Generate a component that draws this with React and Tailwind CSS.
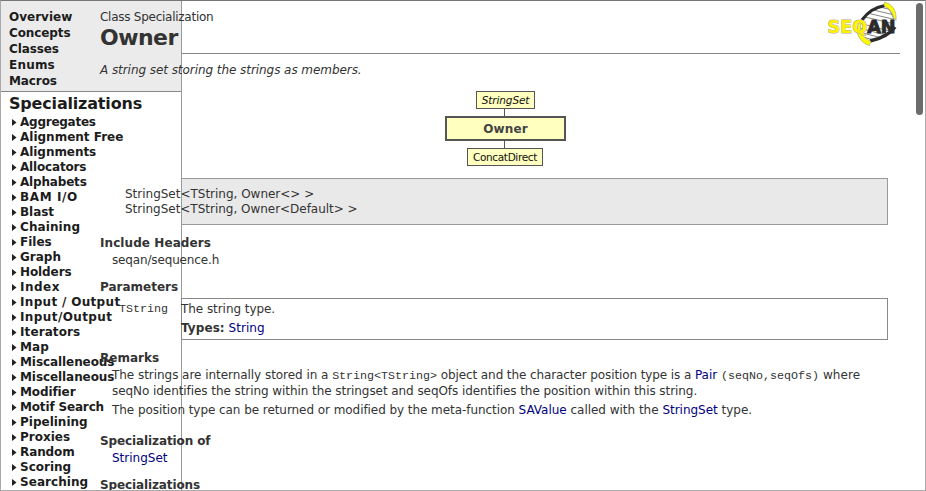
const topLinks = [
  ["Overview", "tracking-[0px]"],
  ["Concepts", "tracking-[-0.1px]"],
  ["Classes", "tracking-[-0.1px]"],
  ["Enums", "tracking-[0.2px]"],
  ["Macros", "tracking-[-0.1px]"],
];

const categories = [
  ["Aggregates", "tracking-[-0.25px]"],
  ["Alignment Free", ""],
  ["Alignments", "tracking-[-0.05px]"],
  ["Allocators", "tracking-[-0.18px]"],
  ["Alphabets", "tracking-[-0.18px]"],
  ["BAM I/O", "tracking-[0.6px]"],
  ["Blast", "tracking-[-0.05px]"],
  ["Chaining", "tracking-[0.1px]"],
  ["Files", ""],
  ["Graph", ""],
  ["Holders", "tracking-[-0.1px]"],
  ["Index", "tracking-[0.5px]"],
  ["Input / Output", "tracking-[0.32px]"],
  ["Input/Output", "tracking-[0.4px]"],
  ["Iterators", "tracking-[0.1px]"],
  ["Map", "tracking-[0.1px]"],
  ["Miscalleneous", "tracking-[-0.08px]"],
  ["Miscellaneous", "tracking-[-0.08px]"],
  ["Modifier", "tracking-[-0.1px]"],
  ["Motif Search", "tracking-[-0.16px]"],
  ["Pipelining", ""],
  ["Proxies", ""],
  ["Random", "tracking-[-0.1px]"],
  ["Scoring", ""],
  ["Searching", "tracking-[0.05px]"],
];

function Sidebar() {
  return (
    <aside className="[grid-area:1/1] w-[182px] h-[491px] border-r border-[#999] overflow-hidden font-bold text-[#1c1c1c]">
      <nav className="h-[92px] bg-[#ebebeb] border-b border-[#888] pt-[9px] pl-[9px]">
        {topLinks.map(([t, c]) => (
          <div key={t} className="h-4 leading-4"><span className={c}>{t}</span></div>
        ))}
      </nav>
      <h2 className="h-[23px] leading-[22px] pl-[9px] pt-px text-[16px] tracking-[-0.18px]"><span>Specializations</span></h2>
      <ul>
        {categories.map(([t, c]) => (
          <li key={t} className="flex items-center h-[15px] leading-[15px] pl-[12px]">
            <svg className="w-2 h-[7px] mb-px shrink-0" viewBox="0 0 8 7"><path d="M0 0L4.500 3.500L0 7Z" fill="#222" /></svg>
            <span className={"whitespace-nowrap " + c}>{t}</span>
          </li>
        ))}
      </ul>
    </aside>
  );
}

function Logo() {
  return (
    <svg className="w-[72px] h-[46px]" viewBox="0 0 72 46">
      <defs><clipPath id="helix"><path d="M34 24C39 13 48 6 59 4C64 9 68 17 67 26C62 34 53 39 44 42C36 37 32 31 34 24Z" /></clipPath></defs>
      <g clipPath="url(#helix)" stroke="#666" strokeWidth="0.8">
        <path d="M44 4L74 11M40 7.500L74 15.500M36 11L74 20M36 15.500L74 24.500M32 27L74 38M32 31L74 42M32 35L74 46M32 22L74 33" />
      </g>
      <path d="M35 19C41 11 47 6.500 58 4.500" fill="none" stroke="#2b2b2b" strokeWidth="3.2" />
      <path d="M60 6C64 11 66 15 67 20" fill="none" stroke="#777" strokeWidth="0.8" />
      <path d="M43 40C53 38 62 34 68 26" fill="none" stroke="#2b2b2b" strokeWidth="3.6" />
      <path d="M57.500 1C65 3 70 9 69 19.500L66.500 16C65 10 62 7.500 57 5Z" fill="#ff0" stroke="#998" strokeWidth="0.6" />
      <path d="M34.500 21C31 30 36 37 44 40.500L42.500 44.500C33 42 27 31 32 22Z" fill="#ff0" stroke="#998" strokeWidth="0.6" />
      <text x="0.5" y="32" textLength="68" lengthAdjust="spacingAndGlyphs" fontFamily="'DejaVu Sans', sans-serif" fontWeight="bold" fontSize="18.5" paintOrder="stroke" fill="#fff200" stroke="#aa9" strokeWidth="1">
        SEQ<tspan fill="#2b2b2b" stroke="#2b2b2b">AN</tspan>
      </text>
    </svg>
  );
}

function Link({ children, className = "" }) {
  return <a className={"text-[#000080] " + className}>{children}</a>;
}

function Diagram() {
  return (
    <div className="flex flex-col items-center w-[121px] ml-[345px] text-[10.5px] text-[#111]">
      <div className="w-[59px] h-[18px] border border-[#555] bg-[#ffffc0] text-center leading-[17px] italic"><span className="tracking-[-0.1px]">StringSet</span></div>
      <div className="w-px h-[7px] mr-[2px] bg-[#555]" />
      <div className="w-[121px] h-[25px] border-2 border-[#555] bg-[#ffffc0] text-center leading-[22px] text-[12px] font-bold text-[#444]"><span className="tracking-[0.1px]">Owner</span></div>
      <div className="w-px h-[7px] mr-[2px] bg-[#555]" />
      <div className="w-[76px] h-[18px] mr-px border border-[#555] bg-[#ffffc0] text-center leading-[17px]"><span className="tracking-[-0.35px]">ConcatDirect</span></div>
    </div>
  );
}

function Code({ children }) {
  return <code className="font-['Liberation_Mono',monospace] text-[11.67px] leading-none">{children}</code>;
}

function Content() {
  return (
    <main className="[grid-area:1/1] w-[926px] h-[491px] overflow-hidden pl-[100px] text-[#333] whitespace-nowrap">
      <header className="flex justify-between h-[53px] w-[799px]">
        <div className="pt-[9px]">
          <div className="h-4 leading-4"><span className="tracking-[-0.26px]">Class Specialization</span></div>
          <h1 className="h-[26px] leading-[25px] text-[22px] font-bold"><span className="tracking-[-0.55px]">Owner</span></h1>
        </div>
        <div className="pt-px"><Logo /></div>
      </header>
      <div className="h-px w-[718px] ml-[82px] bg-[#888]" />
      <p className="h-[37px] pt-2 leading-4 italic"><span className="tracking-[-0.06px]">A string set storing the strings as members.</span></p>
      <Diagram />
      <section className="mt-3 ml-[81px] w-[707px] h-[47px] border border-[#999] bg-[#e9e9e9] pt-[8px]">
        <div className="-ml-[57px] h-[15px] leading-[15px]"><span className="tracking-[-0.01px]">StringSet&lt;TString, Owner&lt;&gt; &gt;</span></div>
        <div className="-ml-[57px] h-[15px] leading-[15px]"><span className="tracking-[-0.02px]">StringSet&lt;TString, Owner&lt;Default&gt; &gt;</span></div>
      </section>
      <h3 className="mt-[10px] h-4 leading-4 font-bold"><span className="tracking-[0.08px]">Include Headers</span></h3>
      <p className="mt-px h-4 leading-4 pl-3"><span className="tracking-[-0.15px]">seqan/sequence.h</span></p>
      <h3 className="mt-[11px] h-4 leading-4 font-bold"><span>Parameters</span></h3>
      <section className="mt-[3px] ml-[81px] w-[707px] h-[42px] border border-[#888] pt-0.5">
        <div className="flex h-4 leading-4 -ml-[63px]">
          <span className="w-[62px] font-['Liberation_Mono',monospace] text-[11.67px] leading-4">TString</span>
          <span className="tracking-[-0.06px]">The string type.</span>
        </div>
        <div className="mt-[3px] h-4 leading-4 -ml-px"><b className="tracking-[0.08px]">Types:</b> <Link className="tracking-[0.05px]">String</Link></div>
      </section>
      <h3 className="mt-[10px] h-4 leading-4 font-bold"><span>Remarks</span></h3>
      <div className="mt-px pl-3">
        <p className="h-4 leading-4">
          <span className="tracking-[-0.045px]">The strings are internally stored in a </span>
          <Code>String&lt;TString&gt;</Code>
          <span className="tracking-[-0.1px]"> object and the character position type is a </span>
          <Link>Pair</Link>{" "}
          <Code>(seqNo,seqOfs)</Code>
          <span className="tracking-[0.08px]"> where</span>
        </p>
        <p className="h-4 leading-4"><span className="tracking-[-0.065px]">seqNo identifies the string within the stringset and seqOfs identifies the position within this string.</span></p>
        <p className="mt-[3px] h-4 leading-4"><span className="tracking-[-0.06px]">The position type can be returned or modified by the meta-function </span><span className="tracking-[-0.02px]"><Link>SAValue</Link> called with the <Link>StringSet</Link> type.</span></p>
      </div>
      <h3 className="mt-[15px] h-4 leading-4 font-bold"><span className="tracking-[-0.11px]">Specialization of</span></h3>
      <p className="mt-px h-4 leading-4 pl-3"><Link>StringSet</Link></p>
      <h3 className="mt-[11px] h-4 leading-4 font-bold"><span className="tracking-[-0.12px]">Specializations</span></h3>
    </main>
  );
}

export default function App() {
  return (
    <div className="relative grid w-[926px] h-[491px] overflow-hidden bg-white text-[12px] font-['Verdana','DejaVu_Sans',sans-serif]">
      <Sidebar />
      <Content />
      <div className="absolute inset-0 border border-[#aaa] border-t-[#777]" />
      <div className="absolute right-[3px] top-[3px] w-[7px] h-[112px] rounded-full bg-[#6c6c6c]" />
    </div>
  );
}
